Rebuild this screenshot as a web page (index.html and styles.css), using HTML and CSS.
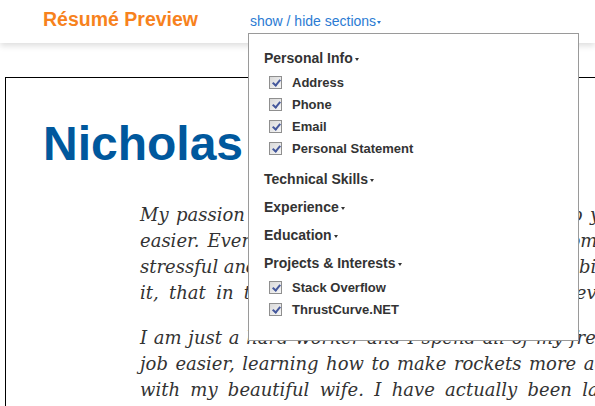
FILE: index.html
```html
<!DOCTYPE html>
<html>
<head>
<meta charset="utf-8">
<title>Résumé Preview</title>
<link rel="stylesheet" href="styles.css">
</head>
<body>
<header class="topbar">
  <h1 class="brand">Résumé Preview</h1>
  <a class="toggle" href="#">show / hide sections<span class="caret"></span></a>
</header>

<main class="page">
  <section class="resume">
    <h2 class="name">Nicholas Piegdon</h2>
    <div class="statement">
      <p>
        <span class="ln ln-1">My passion is making software that lets you do your job</span>
        <span class="ln ln-2">easier. Every day I see people fighting with computer programs</span>
        <span class="ln ln-3">stressful and confusing, and I want to make it a bit easier for those who use</span>
        <span class="ln ln-4">it, that in the end makes life a little better every day.</span>
      </p>
      <p>
        <span class="ln ln-5">I am just a hard worker and I spend all of my free time</span>
        <span class="ln ln-6">job easier, learning how to make rockets more accurate,</span>
        <span class="ln ln-7">with my beautiful wife. I have actually been late to dinner</span>
      </p>
    </div>
  </section>
</main>

<div class="menu">
  <div class="group">
    <div class="heading">Personal Info<span class="caret dark"></span></div>
    <ul class="items">
      <li class="item"><span class="cb"></span>Address</li>
      <li class="item"><span class="cb"></span>Phone</li>
      <li class="item"><span class="cb"></span>Email</li>
      <li class="item"><span class="cb"></span>Personal Statement</li>
    </ul>
  </div>
  <div class="group">
    <div class="heading">Technical Skills<span class="caret dark"></span></div>
  </div>
  <div class="group">
    <div class="heading">Experience<span class="caret dark"></span></div>
  </div>
  <div class="group">
    <div class="heading">Education<span class="caret dark"></span></div>
  </div>
  <div class="group">
    <div class="heading">Projects &amp; Interests<span class="caret dark"></span></div>
    <ul class="items">
      <li class="item"><span class="cb"></span>Stack Overflow</li>
      <li class="item"><span class="cb"></span>ThrustCurve.NET</li>
    </ul>
  </div>
</div>
</body>
</html>
```
FILE: styles.css
```css
html, body {
  margin: 0;
  padding: 0;
  background: #fff;
  overflow: hidden;
  width: 595px;
  height: 406px;
}

body {
  font-family: "Liberation Sans", Arial, sans-serif;
  color: #333;
  position: relative;
}

.topbar {
  height: 43px;
  box-sizing: border-box;
  padding-top: 7px;
  display: flex;
  align-items: baseline;
  background: #fff;
  box-shadow: 0 3px 6px rgba(0, 0, 0, 0.13);
  position: relative;
  z-index: 1;
}

.brand {
  margin: 0 0 0 43px;
  font-size: 19.5px;
  line-height: 24px;
  font-weight: bold;
  color: #f7821d;
}

.toggle {
  margin-left: 52px;
  font-size: 14px;
  color: #2b7bd3;
  text-decoration: none;
}

.caret {
  display: inline-block;
  width: 0;
  height: 0;
  border-left: 2.5px solid transparent;
  border-right: 2.5px solid transparent;
  border-top: 3px solid #2b7bd3;
  vertical-align: middle;
  margin-left: 1px;
}

.caret.dark {
  border-top-color: #333;
  margin-left: 2px;
}

.page {
  padding-top: 34px;
  width: 900px;
}

.resume {
  margin-left: 5px;
  border: 1px solid #000;
  border-right: none;
  padding: 42px 0 40px 37px;
}

.name {
  margin: 0;
  font-size: 48px;
  line-height: 48px;
  font-weight: bold;
  color: #00589d;
  white-space: nowrap;
}

.statement {
  margin-left: 97px;
  width: 740px;
  font-family: "DejaVu Serif", Georgia, serif;
  font-style: italic;
  font-size: 18px;
  line-height: 26px;
  color: #333;
}

.statement p {
  margin: 34px 0 0;
}

.statement p + p {
  margin-top: 19px;
}

.ln {
  display: block;
  white-space: nowrap;
}

.ln-1 { word-spacing: 1.6px; }
.ln-2 { word-spacing: 2.4px; }
.ln-3 { word-spacing: -0.2px; }
.ln-4 { word-spacing: 4.6px; }
.ln-5 { word-spacing: 1px; }
.ln-6 { word-spacing: 1.8px; }
.ln-7 { word-spacing: 4.6px; }

.menu {
  position: absolute;
  left: 248px;
  top: 33px;
  width: 314px;
  padding: 10px 0 14px 15px;
  background: #fff;
  border: 1px solid #9a9a9a;
  z-index: 2;
}

.heading {
  font-size: 14px;
  line-height: 28px;
  font-weight: bold;
  color: #333;
}

.items {
  list-style: none;
  margin: 0 0 5px;
  padding: 0;
}

.item {
  display: flex;
  align-items: center;
  font-size: 13px;
  line-height: 22px;
  font-weight: bold;
  color: #333;
}

.cb {
  box-sizing: border-box;
  width: 13px;
  height: 13px;
  margin: -1px 10px 0 5px;
  border: 1px solid #8f8f8f;
  background: linear-gradient(135deg, #d9d9d9, #f6f6f6);
  position: relative;
}

.cb::after {
  content: "";
  position: absolute;
  left: 3.5px;
  top: 1px;
  width: 3px;
  height: 6px;
  border-right: 2px solid #45589c;
  border-bottom: 2px solid #45589c;
  transform: rotate(40deg);
}
```
